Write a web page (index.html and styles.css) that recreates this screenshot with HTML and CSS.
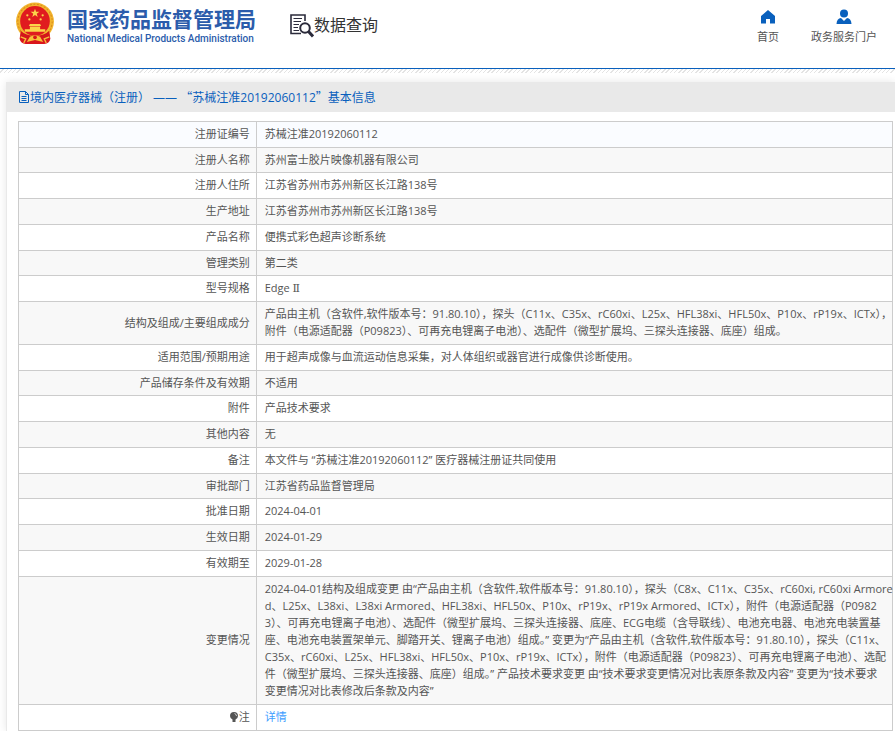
FILE: index.html
```html
<!DOCTYPE html>
<html lang="zh-CN">
<head>
<meta charset="utf-8">
<meta name="viewport" content="width=device-width, initial-scale=1">
<title>国家药品监督管理局 数据查询</title>
<link rel="stylesheet" href="styles.css">
</head>
<body>
<header class="site-header">
  <a class="brand" href="#">
    <svg class="emblem" viewBox="0 0 38 42" aria-hidden="true">
      <path d="M5 29L4 36Q5 41 10 41H28Q33 41 34 36L33 29Z" fill="#d9151c"/>
      <circle cx="19" cy="19" r="18.500" fill="#f2b52e"/>
      <circle cx="19" cy="19" r="16.800" fill="none" stroke="#d98a1c" stroke-width="1" stroke-dasharray="2 1.500"/>
      <circle cx="19" cy="18.500" r="14.500" fill="#e01b1f"/>
      <path d="M19 6.500l1.100 3h3.200l-2.600 2 1 3.100-2.700-1.900-2.700 1.900 1-3.100-2.600-2h3.200z" fill="#fbd44a"/>
      <g fill="#fbd44a">
        <circle cx="11.500" cy="13" r="1.100"/><circle cx="13.500" cy="17" r="1.100"/><circle cx="24.500" cy="17" r="1.100"/><circle cx="26.500" cy="13" r="1.100"/>
        <path d="M14 21.500h10l1 2h-12zM14 24h10v2.500h5v2.500H9v-2.500h5z"/>
      </g>
      <path d="M5 28Q10 33 19 33T33 28L33 35Q26 38 19 38T5 35Z" fill="#d3161b"/>
      <path d="M14 34Q19 31 24 34L27 39 19 37 11 39Z" fill="#f6c23a"/>
      <path d="M5 34l5 2-2 4M33 34l-5 2 2 4" fill="none" stroke="#f6c23a" stroke-width="1.300"/>
      <circle cx="19" cy="34.500" r="1.800" fill="#d9151c"/>
    </svg>
    <span class="brand-text">
      <span class="brand-cn">国家药品监督管理局</span>
      <span class="brand-en">National Medical Products Administration</span>
    </span>
  </a>
  <a class="section" href="#">
    <svg class="section-icon" viewBox="0 0 24 24" aria-hidden="true" fill="none" stroke="#2b2b3b">
      <path d="M15 7V1H1V19.500H11" stroke-width="1.600"/>
      <path d="M3.500 4.500H12M3.500 7.500H11M3.500 10.500H9M3.500 13.500H8M3.500 16.500H9" stroke-width="1.200"/>
      <circle cx="15" cy="14" r="4.800" stroke-width="2"/>
      <path d="M18.500 17.500L23 22.500" stroke-width="3"/>
    </svg>
    <span>数据查询</span>
  </a>
  <nav class="top-nav">
    <a href="#">
      <svg viewBox="0 0 16 16" aria-hidden="true"><path d="M8 1L1 7V14.500H6V10H10V14.500H15V7Z" fill="#0960bd"/></svg>
      <span>首页</span>
    </a>
    <a href="#">
      <svg viewBox="0 0 16 16" aria-hidden="true"><circle cx="8" cy="4.500" r="4" fill="#0960bd"/><path d="M.5 15Q.8 9.500 5 9L8 12 11 9Q15.200 9.500 15.500 15Z" fill="#0960bd"/></svg>
      <span>政务服务门户</span>
    </a>
  </nav>
</header>
<div class="hatch"></div>
<main class="panel">
  <h1 class="panel-title">
    <svg viewBox="0 0 12 12" aria-hidden="true" fill="none" stroke="#0960bd"><path d="M1.500.5H7.500L10.500 3.500V11.500H1.500ZM7.500.5V3.500H10.500M3.500 5.500H8.500M3.500 7.500H8.500M3.500 9.500H8.500"/></svg>
    <span>境内医疗器械（注册） —— <span class="cjk">“</span>苏械注准20192060112<span class="cjk">”</span>基本信息</span>
  </h1>
  <div class="panel-body">
    <table class="info">
      <tbody>
        <tr><th scope="row">注册证编号</th><td>苏械注准20192060112</td></tr>
        <tr><th scope="row">注册人名称</th><td>苏州富士胶片映像机器有限公司</td></tr>
        <tr><th scope="row">注册人住所</th><td>江苏省苏州市苏州新区长江路138号</td></tr>
        <tr><th scope="row">生产地址</th><td>江苏省苏州市苏州新区长江路138号</td></tr>
        <tr><th scope="row">产品名称</th><td>便携式彩色超声诊断系统</td></tr>
        <tr><th scope="row">管理类别</th><td>第二类</td></tr>
        <tr><th scope="row">型号规格</th><td>Edge <span class="roman">Ⅱ</span></td></tr>
        <tr><th scope="row">结构及组成/主要组成成分</th><td>产品由主机（含软件,软件版本号：91.80.10），探头（C11x、C35x、rC60xi、L25x、HFL38xi、HFL50x、P10x、rP19x、ICTx），<br>附件（电源适配器（P09823）、可再充电锂离子电池）、选配件（微型扩展坞、三探头连接器、底座）组成。</td></tr>
        <tr><th scope="row">适用范围/预期用途</th><td>用于超声成像与血流运动信息采集，对人体组织或器官进行成像供诊断使用。</td></tr>
        <tr><th scope="row">产品储存条件及有效期</th><td>不适用</td></tr>
        <tr><th scope="row">附件</th><td>产品技术要求</td></tr>
        <tr><th scope="row">其他内容</th><td>无</td></tr>
        <tr><th scope="row">备注</th><td>本文件与 “苏械注准20192060112” 医疗器械注册证共同使用</td></tr>
        <tr><th scope="row">审批部门</th><td>江苏省药品监督管理局</td></tr>
        <tr><th scope="row">批准日期</th><td>2024-04-01</td></tr>
        <tr><th scope="row">生效日期</th><td>2024-01-29</td></tr>
        <tr><th scope="row">有效期至</th><td>2029-01-28</td></tr>
        <tr><th scope="row">变更情况</th><td>2024-04-01结构及组成变更 由“产品由主机（含软件,软件版本号：91.80.10），探头（C8x、C11x、C35x、rC60xi, rC60xi Armore<br>d、L25x、L38xi、L38xi Armored、HFL38xi、HFL50x、P10x、rP19x、rP19x Armored、ICTx），附件（电源适配器（P0982<br>3）、可再充电锂离子电池）、选配件（微型扩展坞、三探头连接器、底座、ECG电缆（含导联线）、电池充电器、电池充电装置基<br>座、电池充电装置架单元、脚踏开关、锂离子电池）组成。” 变更为“产品由主机（含软件,软件版本号：91.80.10），探头（C11x、<br>C35x、rC60xi、L25x、HFL38xi、HFL50x、P10x、rP19x、ICTx），附件（电源适配器（P09823）、可再充电锂离子电池）、选配<br>件（微型扩展坞、三探头连接器、底座）组成。” 产品技术要求变更 由“技术要求变更情况对比表原条款及内容” 变更为“技术要求<br>变更情况对比表修改后条款及内容”</td></tr>
        <tr><th scope="row"><svg class="note-icon" viewBox="0 0 8 10" aria-hidden="true"><path d="M4 0A4 4 0 0 0 0 4Q0 6 2.500 7.500V10H5.500V7.500Q8 6 8 4A4 4 0 0 0 4 0Z" fill="#555"/><path d="M4.500 1.500Q6.500 2 6.500 4" fill="none" stroke="#fff" stroke-width=".7"/></svg>注</th><td><a class="detail" href="#">详情</a></td></tr>
      </tbody>
    </table>
  </div>
</main>
</body>
</html>
```
FILE: styles.css
```css
* { box-sizing: border-box; }

body {
  margin: 0;
  background: #fff;
  color: #555;
  font: 11px/17px "Open Sans", "Noto Sans CJK SC", sans-serif;
}

a { color: inherit; text-decoration: none; }
svg { display: block; flex: none; }

.site-header {
  display: flex;
  align-items: flex-start;
  height: 69px;
  padding: 2px 18px 0 15px;
  border-bottom: 1px solid #0960bd;
}

.brand { display: flex; gap: 12px; }
.emblem { width: 40px; height: 43px; }
.brand-text { display: flex; flex-direction: column; color: #2b5cab; white-space: nowrap; }
.brand-cn { font: bold 21px/30px "Noto Sans CJK SC", sans-serif; margin-top: 1px; }
.brand-en { font: 500 10px/12px Roboto, sans-serif; }

.section {
  display: flex;
  margin: 12px 0 0 34px;
  color: #333;
  font: 16px/20px "Noto Sans CJK SC", sans-serif;
  white-space: nowrap;
}
.section-icon { width: 24px; height: 24px; }

.top-nav { display: flex; gap: 32px; margin: 7px 0 0 auto; }
.top-nav a { display: flex; flex-direction: column; align-items: center; gap: 3px; white-space: nowrap; }
.top-nav svg { width: 16px; height: 16px; }

.hatch {
  height: 4px;
  background: repeating-linear-gradient(135deg, #fff 0 2px, #e4e4e4 2px 3px);
}

.panel {
  margin: 9px 0 0 6px;
  border-left: 1px solid #e9e9e9;
  box-shadow: 0 0 8px rgba(0, 0, 0, .1);
}
.panel-title {
  display: flex;
  align-items: center;
  height: 30px;
  margin: 0;
  padding-left: 11px;
  background: #e9e9e9;
  color: #0960bd;
  font-size: 12px;
  font-weight: 400;
  white-space: nowrap;
}
.panel-title svg { width: 12px; height: 12px; }
.cjk { font-family: "Noto Sans CJK SC", sans-serif; }
.roman { font-family: "DejaVu Serif", serif; line-height: 1; }
.panel-body { padding: 9px 2px 0 11px; background: #fff; }

.info { width: 100%; border-collapse: collapse; table-layout: fixed; }
.info th, .info td {
  padding: 3px 8px 5px;
  border: 1px solid #ccc;
  vertical-align: middle;
}
.info th { width: 27.2%; padding-right: 6px; font-weight: 400; text-align: right; }
.info td { white-space: nowrap; }
.info tr:nth-child(even) { background: #f8f8f8; }
.info tr:first-child { background: #fafcff; }
.info tr:nth-child(4n+2):nth-child(-n+14) > * { padding-bottom: 4px; }
.note-icon { display: inline-block; width: 8px; height: 10px; margin-right: 1px; vertical-align: -1px; }
.detail { color: #409eff; }
```
